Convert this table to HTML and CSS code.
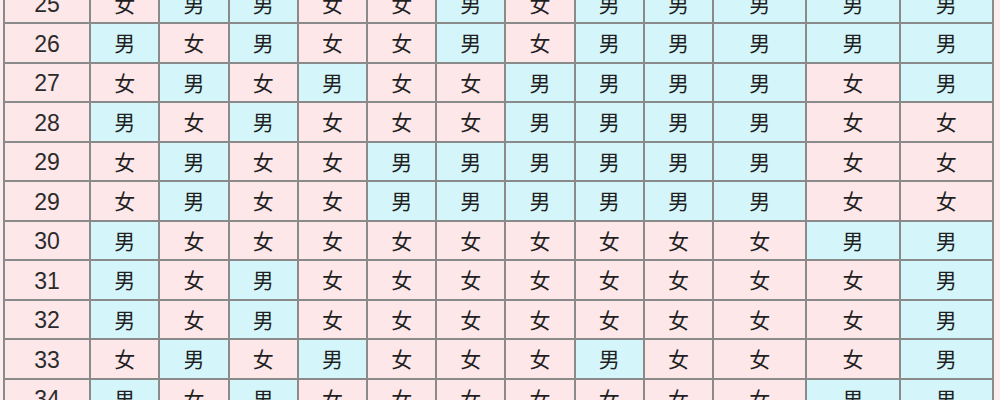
FILE: index.html
```html
<!DOCTYPE html>
<html lang="zh">
<head>
<meta charset="utf-8">
<title>生男生女表</title>
<link rel="stylesheet" href="styles.css">
</head>
<body>
<table class="chart">
<colgroup>
<col class="c-age">
<col class="c-n"><col class="c-n"><col class="c-n"><col class="c-n"><col class="c-n"><col class="c-n"><col class="c-n"><col class="c-n"><col class="c-n">
<col class="c-w"><col class="c-w"><col class="c-w">
</colgroup>
<tbody id="rows"></tbody>
</table>
<script src="app.js"></script>
</body>
</html>
```

FILE: styles.css
```css
html, body {
  margin: 0;
  padding: 0;
  background: #fdedef;
  overflow: hidden;
}
.chart {
  table-layout: fixed;
  border-collapse: separate;
  border-spacing: 2px;
  background: #8a8a8a;
  width: 991px;
  margin: -17.5px 0 0 3px;
}
.c-age { width: 84px; }
.c-n { width: 67px; }
.c-w { width: 91px; }
.chart td {
  box-sizing: border-box;
  height: 37.5px;
  padding: 0;
  text-align: center;
  vertical-align: middle;
  font-family: "Noto Sans CJK SC", "Liberation Sans", sans-serif;
  font-size: 21px;
  color: #1f1f1f;
  line-height: 1;
}
.chart td.age {
  font-family: "Liberation Sans", sans-serif;
  font-size: 23px;
  color: #2b2b2b;
  padding-top: 3px;
  background: #fde7e9;
}
.chart td.f { background: #fde7e9; }
.chart td.m { background: #d4f6fa; }
```

FILE: app.js
```js
var data = [
  ["25", "女男男女女男女男男男男男"],
  ["26", "男女男女女男女男男男男男"],
  ["27", "女男女男女女男男男男女男"],
  ["28", "男女男女女女男男男男女女"],
  ["29", "女男女女男男男男男男女女"],
  ["29", "女男女女男男男男男男女女"],
  ["30", "男女女女女女女女女女男男"],
  ["31", "男女男女女女女女女女女男"],
  ["32", "男女男女女女女女女女女男"],
  ["33", "女男女男女女女男女女女男"],
  ["34", "男女男女女女女女女女男男"]
];
var tb = document.getElementById("rows");
data.forEach(function (r) {
  var tr = document.createElement("tr");
  var a = document.createElement("td");
  a.className = "age";
  a.textContent = r[0];
  tr.appendChild(a);
  Array.from(r[1]).forEach(function (ch) {
    var td = document.createElement("td");
    td.className = ch === "男" ? "m" : "f";
    td.textContent = ch;
    tr.appendChild(td);
  });
  tb.appendChild(tr);
});
```
